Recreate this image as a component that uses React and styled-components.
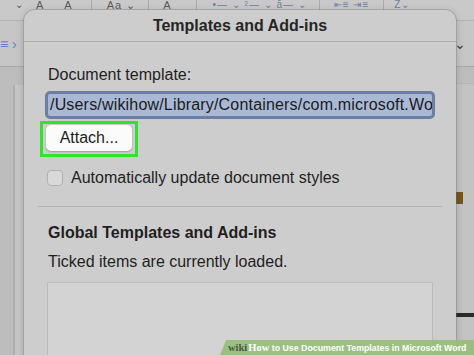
import React from "react";
import styled, { createGlobalStyle } from "styled-components";

const Global = createGlobalStyle`
  html, body { margin: 0; padding: 0; background: #bcbcbc; }
  body { font-family: "Liberation Sans", Arial, sans-serif; }
  #root { width: 474px; height: 355px; }
`;

const Screen = styled.div`
  position: relative;
  width: 474px;
  height: 355px;
  overflow: hidden;
  background: #bdbdbd;
  display: flex;
  flex-direction: column;
`;

const Toolbar = styled.div`
  height: 20px;
  flex-shrink: 0;
  display: flex;
  align-items: flex-start;
  background: #c9c9c9;
  border-bottom: 1px solid #b2b2b2;
  overflow: hidden;
  color: #5a5a5a;
`;

const Tool = styled.span`
  margin-left: ${(p) => p.$ml || 0}px;
  white-space: nowrap;
  line-height: 10px;
  color: ${(p) => p.$c || "#5a5a5a"};
  font-size: ${(p) => p.$fs || 11}px;
  letter-spacing: 1px;
`;

const ToolSep = styled.span`
  width: 1px;
  height: 14px;
  margin-left: ${(p) => p.$ml || 0}px;
  background: #a9a9a9;
`;

const Ribbon = styled.div`
  height: 45px;
  flex-shrink: 0;
  display: flex;
  align-items: center;
  justify-content: space-between;
  background: #c6c6c6;
  border-bottom: 1px solid #a9a9a9;
  color: #444;
  font-size: 14px;
`;

const RibbonMark = styled.span`
  padding: 0 ${(p) => p.$pad || 0}px;
  color: ${(p) => p.$c || "#444"};
`;

const DocArea = styled.div`
  flex: 1;
  display: flex;
  justify-content: space-between;
  background: #bdbdbd;
`;

const PageEdge = styled.div`
  width: 10px;
  margin-left: 13px;
  margin-top: 18px;
  border-left: 2px solid #aeaeae;
  background: #c7c7c7;
`;

const RightStrip = styled.div`
  width: 18px;
  display: flex;
  flex-direction: column;
  background: #c3c3c3;
  border-top: 1px solid #b4b4b4;
  margin-top: 16px;
`;

const BrownMark = styled.div`
  width: 7px;
  height: 12px;
  margin-top: 108px;
  background: #7a5417;
`;

const BlackBar = styled.div`
  height: 4px;
  margin-top: 109px;
  background: #2a2a2a;
`;

const Dialog = styled.div`
  position: absolute;
  left: 24px;
  top: 10px;
  width: 432px;
  height: 370px;
  background: #cdcdcd;
  border-radius: 11px 11px 0 0;
  box-shadow: 0 0 0 1px rgba(120, 120, 120, 0.35), 0 2px 8px rgba(0, 0, 0, 0.18);
`;

const TitleBar = styled.div`
  height: 32px;
  display: flex;
  align-items: center;
  justify-content: center;
  border-bottom: 1px solid #aeaeae;
  font-weight: 700;
  font-size: 16px;
  color: #262626;
  padding-top: 1px;
  box-sizing: border-box;
`;

const Body = styled.div`
  padding: 23px 21px 0;
  display: flex;
  flex-direction: column;
  align-items: flex-start;
`;

const Label = styled.div`
  font-size: 16px;
  line-height: 19px;
  color: #1f1f1f;
  margin-left: 3px;
  margin-top: ${(p) => p.$mt || 0}px;
  font-weight: ${(p) => (p.$bold ? 700 : 400)};
`;

const PathField = styled.div`
  margin-top: 7px;
  width: 390px;
  height: 28px;
  flex-shrink: 0;
  box-sizing: border-box;
  border: 3px solid #6a7fa3;
  border-radius: 5px;
  background: #a9b9d5;
  display: flex;
  align-items: center;
  padding-left: 2px;
  overflow: hidden;
  white-space: nowrap;
  font-size: 16px;
  letter-spacing: 0.18px;
  color: #1b1b1b;
`;

const Highlight = styled.div`
  margin-top: 2px;
  margin-left: -5px;
  border: 3px solid #2fe42f;
  padding: 1px 3px 3px;
`;

const Button = styled.div`
  width: 86px;
  height: 26px;
  border-radius: 5px;
  background: #fbfbfb;
  box-shadow: 0 1px 1.5px rgba(0, 0, 0, 0.25);
  display: flex;
  align-items: center;
  justify-content: center;
  font-size: 16px;
  color: #1c1c1c;
`;

const CheckRow = styled.div`
  margin-top: 12px;
  margin-left: 2px;
  display: flex;
  align-items: center;
  gap: 8px;
  font-size: 16px;
  color: #1f1f1f;
`;

const Box = styled.div`
  width: 16px;
  height: 16px;
  box-sizing: border-box;
  border: 1px solid #b0b0b0;
  border-radius: 4px;
  background: #d9d9d9;
`;

const Divider = styled.div`
  align-self: stretch;
  margin: 19px -7px 0;
  height: 1px;
  background: #b3b3b3;
`;

const ListBox = styled.div`
  margin: 11px 0 0 2px;
  width: 386px;
  height: 100px;
  box-sizing: border-box;
  border: 1px solid #bcbcbc;
  background: #d3d3d3;
`;

const Banner = styled.div`
  position: absolute;
  left: 220px;
  bottom: 0;
  height: 15px;
  width: 266px;
  background: rgba(150, 190, 120, 0.9);
  transform: skewX(-22deg);
  transform-origin: bottom left;
  display: flex;
  align-items: center;
  padding-left: 5px;
  box-sizing: border-box;
`;

const BannerText = styled.div`
  transform: skewX(22deg);
  white-space: nowrap;
  font-size: 8.8px;
  font-weight: 700;
  color: #ffffff;
`;

const Wiki = styled.span`
  font-family: "Liberation Serif", serif;
  color: #4b5840;
  font-size: 10.5px;
  margin-right: 1px;
`;

const How = styled.span`
  font-family: "Liberation Serif", serif;
  font-size: 10.5px;
`;

export default function App() {
  return (
    <>
      <Global />
      <Screen>
        <Toolbar>
          <Tool $ml={15} $fs={10}>⌄</Tool>
          <Tool $ml={12}>A</Tool>
          <Tool $ml={20}>A</Tool>
          <ToolSep $ml={18} />
          <Tool $ml={15}>Aa ⌄</Tool>
          <ToolSep $ml={12} />
          <Tool $ml={14}>A</Tool>
          <ToolSep $ml={24} />
          <Tool $ml={16} $fs={10} $c="#6a7fa8">•— ⌄  ²— ⌄  ā— ⌄</Tool>
          <ToolSep $ml={12} />
          <Tool $ml={14} $fs={10} $c="#6a7fa8">⇤≡  ⇥≡</Tool>
          <ToolSep $ml={14} />
          <Tool $ml={10} $fs={10} $c="#6a7fa8">Z⌄</Tool>
        </Toolbar>
        <Ribbon>
          <RibbonMark $c="#5b7fc0">≡ ›</RibbonMark>
          <RibbonMark $pad={8}>⌄</RibbonMark>
        </Ribbon>
        <DocArea>
          <PageEdge />
          <RightStrip>
            <BrownMark />
            <BlackBar />
          </RightStrip>
        </DocArea>

        <Dialog>
          <TitleBar>Templates and Add-ins</TitleBar>
          <Body>
            <Label>Document template:</Label>
            <PathField>/Users/wikihow/Library/Containers/com.microsoft.Word/Data/Library/Application Support</PathField>
            <Highlight>
              <Button>Attach...</Button>
            </Highlight>
            <CheckRow>
              <Box />
              Automatically update document styles
            </CheckRow>
            <Divider />
            <Label $bold $mt={16}>Global Templates and Add-ins</Label>
            <Label $mt={10}>Ticked items are currently loaded.</Label>
            <ListBox />
          </Body>
        </Dialog>

        <Banner>
          <BannerText>
            <Wiki>wiki</Wiki>
            <How>How</How> to Use Document Templates in Microsoft Word
          </BannerText>
        </Banner>
      </Screen>
    </>
  );
}
